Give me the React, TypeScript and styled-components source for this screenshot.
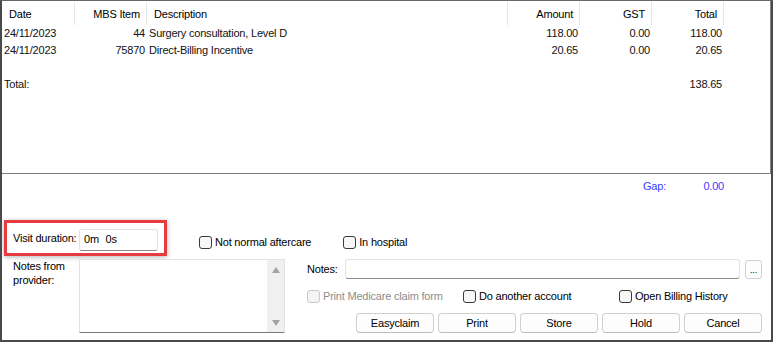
import React from 'react';
import styled, { createGlobalStyle } from 'styled-components';

const GlobalStyle = createGlobalStyle`
  html, body {
    margin: 0;
    padding: 0;
    background: #ffffff;
  }
  body {
    font-family: "Liberation Sans", Arial, sans-serif;
    font-size: 11px;
    letter-spacing: -0.2px;
    color: #000;
  }
  * {
    box-sizing: border-box;
  }
`;

const Frame = styled.div`
  width: 773px;
  height: 342px;
  border-left: 2px solid #4a4a4a;
  border-top: 1px solid #6a6a6a;
  border-right: 2px solid #4a4a4a;
  border-bottom: 2px solid #4a4a4a;
  display: flex;
  flex-direction: column;
  background: #fff;
  overflow: hidden;
`;

/* ---- billing grid ---- */

const GridPanel = styled.div`
  height: 173px;
  flex-shrink: 0;
  border-right: 1px solid #858585;
  border-bottom: 1px solid #7c7c7c;
`;

const columns = '73px 72px 361px 72px 72px 72px';

const HeaderRow = styled.div`
  display: grid;
  grid-template-columns: ${columns};
  height: 24px;
`;

const HeaderCell = styled.div<{ $right?: boolean }>`
  margin-top: 1px;
  border-right: 1px solid #e5e5e5;
  display: flex;
  align-items: center;
  justify-content: ${p => (p.$right ? 'flex-end' : 'flex-start')};
  padding: 0 6px 0 7px;
`;

const Row = styled.div`
  display: grid;
  grid-template-columns: ${columns};
  height: 17px;
  line-height: 17px;
`;

const Cell = styled.div<{ $right?: boolean }>`
  padding: 0 2px;
  text-align: ${p => (p.$right ? 'right' : 'left')};
  white-space: nowrap;
  color: #111;
`;

/* ---- lower form ---- */

const Lower = styled.div`
  flex: 1;
  display: flex;
  flex-direction: column;
`;

const GapRow = styled.div`
  height: 24px;
  display: flex;
  justify-content: flex-end;
  align-items: center;
  padding-right: 47px;
  color: #3a3aff;
`;

const GapValue = styled.span`
  width: 58px;
  text-align: right;
`;

const ControlsRow = styled.div`
  margin-top: 22px;
  padding-left: 2px;
  display: flex;
  align-items: flex-start;
  gap: 32px;
`;

const Highlight = styled.div`
  width: 163px;
  height: 36px;
  border: 3px solid #e63b3f;
  padding: 6px 6px 2px 6px;
  display: flex;
  align-items: center;
  box-shadow: 0 1px 5px rgba(0, 0, 0, 0.3);
`;

const FieldLabel = styled.span<{ $width?: number }>`
  flex: ${p => (p.$width ? `0 0 ${p.$width}px` : '1')};
  white-space: nowrap;
`;

const DurationLabel = styled(FieldLabel)`
  margin-top: -5px;
`;

const TextBox = styled.div<{ $width?: number }>`
  ${p => (p.$width ? `width: ${p.$width}px;` : 'flex: 1;')}
  height: ${p => (p.$width ? 22 : 20)}px;
  background: #fff;
  border: 1px solid #e3e3e3;
  border-bottom-color: #8a8a8a;
  border-radius: 3px;
  display: flex;
  align-items: center;
  padding: 0 4px 2px;
  letter-spacing: 0;
`;

const TopChecks = styled.div`
  padding-top: 15px;
  display: flex;
  gap: 32px;
`;

const CheckItem = styled.label<{ $disabled?: boolean }>`
  display: flex;
  align-items: center;
  gap: 3px;
  height: 14px;
  white-space: nowrap;
  color: ${p => (p.$disabled ? '#8d8d8d' : '#000')};
`;

const Box = styled.span<{ $disabled?: boolean }>`
  width: 13px;
  height: 13px;
  border: 1px solid ${p => (p.$disabled ? '#c9c9c9' : '#3a3a3a')};
  border-radius: 3px;
  background: ${p => (p.$disabled ? '#f4f4f4' : '#f7f7f7')};
  flex-shrink: 0;
`;

const BottomArea = styled.div`
  margin-top: 3px;
  padding: 0 9px 0 11px;
  display: grid;
  grid-template-columns: 66px 206px 1fr;
`;

const ProviderLabel = styled.div`
  line-height: 14px;
`;

const Memo = styled.div`
  height: 74px;
  border: 1px solid #e2e2e2;
  border-bottom-color: #7a7a7a;
  display: flex;
  background: #fff;
`;

const MemoText = styled.div`
  flex: 1;
`;

const ScrollBar = styled.div`
  width: 17px;
  background: #f0f0f0;
  display: flex;
  flex-direction: column;
  justify-content: space-between;
  align-items: center;
  padding: 7px 0 6px;
`;

const Arrow = styled.span<{ $down?: boolean }>`
  width: 0;
  height: 0;
  border-left: 4px solid transparent;
  border-right: 4px solid transparent;
  ${p =>
    p.$down
      ? 'border-top: 6px solid #a3a3a3;'
      : 'border-bottom: 6px solid #a3a3a3;'}
`;

const RightPart = styled.div`
  padding-left: 22px;
  display: flex;
  flex-direction: column;
`;

const NotesRow = styled.div`
  height: 20px;
  display: flex;
  align-items: center;
`;

const EllipsisButton = styled.div`
  width: 17px;
  height: 19px;
  margin-left: 5px;
  border: 1px solid #d0d0d0;
  border-radius: 3px;
  background: #fdfdfd;
  display: flex;
  align-items: flex-end;
  justify-content: center;
  padding-bottom: 3px;
  font-size: 9px;
  line-height: 9px;
`;

const CheckRow = styled.div`
  margin-top: 9px;
  height: 16px;
  display: grid;
  grid-template-columns: 156px 156px auto;
  align-items: center;
`;

const ButtonRow = styled.div`
  margin-top: 9px;
  display: flex;
  justify-content: flex-end;
  gap: 4px;
`;

const Button = styled.div`
  width: 78px;
  height: 20px;
  border: 1px solid #d0d0d0;
  border-bottom-color: #bdbdbd;
  border-radius: 4px;
  background: #fdfdfd;
  display: flex;
  align-items: center;
  justify-content: center;
  padding-bottom: 1px;
`;

type Line = { date: string; item: string; desc: string; amount: string; gst: string; total: string };

const lines: Line[] = [
  { date: '24/11/2023', item: '44', desc: 'Surgery consultation, Level D', amount: '118.00', gst: '0.00', total: '118.00' },
  { date: '24/11/2023', item: '75870', desc: 'Direct-Billing Incentive', amount: '20.65', gst: '0.00', total: '20.65' },
];

const Check: React.FC<{ label: string; disabled?: boolean }> = ({ label, disabled }) => (
  <CheckItem $disabled={disabled}>
    <Box $disabled={disabled} />
    {label}
  </CheckItem>
);

export default function App() {
  return (
    <>
      <GlobalStyle />
      <Frame>
        <GridPanel>
          <HeaderRow>
            <HeaderCell>Date</HeaderCell>
            <HeaderCell $right>MBS Item</HeaderCell>
            <HeaderCell>Description</HeaderCell>
            <HeaderCell $right>Amount</HeaderCell>
            <HeaderCell $right>GST</HeaderCell>
            <HeaderCell $right>Total</HeaderCell>
          </HeaderRow>
          {lines.map((l, i) => (
            <Row key={i}>
              <Cell>{l.date}</Cell>
              <Cell $right>{l.item}</Cell>
              <Cell>{l.desc}</Cell>
              <Cell $right>{l.amount}</Cell>
              <Cell $right>{l.gst}</Cell>
              <Cell $right>{l.total}</Cell>
            </Row>
          ))}
          <Row />
          <Row>
            <Cell>Total:</Cell>
            <Cell />
            <Cell />
            <Cell />
            <Cell />
            <Cell $right>138.65</Cell>
          </Row>
        </GridPanel>

        <Lower>
          <GapRow>
            <span>Gap:</span>
            <GapValue>0.00</GapValue>
          </GapRow>

          <ControlsRow>
            <Highlight>
              <DurationLabel>Visit duration:</DurationLabel>
              <TextBox $width={79}>0m&nbsp;&nbsp;0s</TextBox>
            </Highlight>
            <TopChecks>
              <Check label="Not normal aftercare" />
              <Check label="In hospital" />
            </TopChecks>
          </ControlsRow>

          <BottomArea>
            <ProviderLabel>
              Notes from
              <br />
              provider:
            </ProviderLabel>
            <Memo>
              <MemoText />
              <ScrollBar>
                <Arrow />
                <Arrow $down />
              </ScrollBar>
            </Memo>
            <RightPart>
              <NotesRow>
                <FieldLabel $width={38}>Notes:</FieldLabel>
                <TextBox />
                <EllipsisButton>...</EllipsisButton>
              </NotesRow>
              <CheckRow>
                <Check label="Print Medicare claim form" disabled />
                <Check label="Do another account" />
                <Check label="Open Billing History" />
              </CheckRow>
              <ButtonRow>
                <Button>Easyclaim</Button>
                <Button>Print</Button>
                <Button>Store</Button>
                <Button>Hold</Button>
                <Button>Cancel</Button>
              </ButtonRow>
            </RightPart>
          </BottomArea>
        </Lower>
      </Frame>
    </>
  );
}
